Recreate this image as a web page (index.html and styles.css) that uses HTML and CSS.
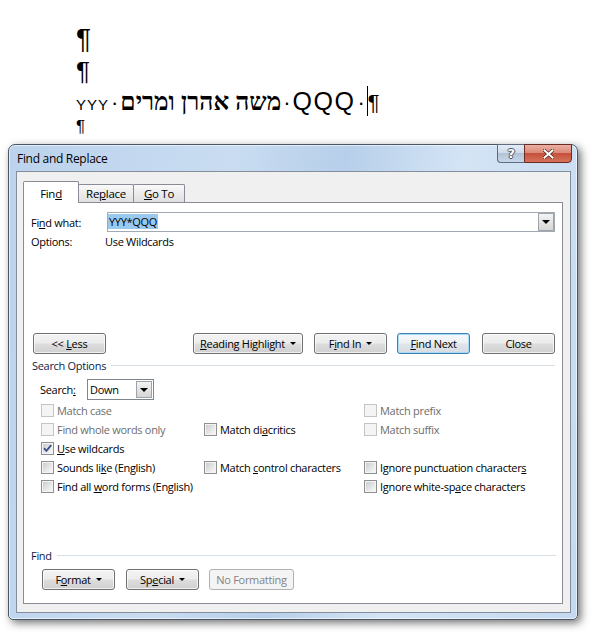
FILE: index.html
```html
<!DOCTYPE html>
<html lang="en">
<head>
    <meta charset="UTF-8">
    <title>Find and Replace</title>
    <link rel="stylesheet" href="styles.css">
</head>
<body>

    <div class="doc">
        <p class="mark-a">¶</p>
        <p class="mark-b">¶</p>
        <p class="text-line"><span class="yyy">YYY</span><span class="dot">·</span><span class="heb">משה אהרן ומרים</span><span class="dot">·</span><span class="qqq">QQQ</span><span class="dot">·</span><span class="caret"></span><span class="end">¶</span></p>
        <p class="mark-c">¶</p>
    </div>

    <div class="window">
        <div class="titlebar">
            <span class="title">Find and Replace</span>
            <div class="caption">
                <span class="cap help">?</span>
                <span class="cap close">
                    <svg width="11" height="10" viewBox="0 0 11 10">
                        <path d="M1.5 1.5 L9.5 8.5 M9.5 1.5 L1.5 8.5" stroke="#5a2a24" stroke-width="3.6" stroke-linecap="square"/>
                        <path d="M1.5 1.5 L9.5 8.5 M9.5 1.5 L1.5 8.5" stroke="#ffffff" stroke-width="2" stroke-linecap="square"/>
                    </svg>
                </span>
            </div>
        </div>

        <div class="client">
            <div class="tabs">
                <span class="tab active">Fin<u>d</u></span>
                <span class="tab replace">Re<u>p</u>lace</span>
                <span class="tab goto"><u>G</u>o To</span>
            </div>

            <div class="panel">
                <div class="find-row">
                    <span class="row-label">Fi<u>n</u>d what:</span>
                    <div class="combo">
                        <span class="sel">YYY*QQQ</span>
                        <span class="drop"><i class="tri"></i></span>
                    </div>
                </div>

                <div class="opt-row">
                    <span class="opt-label">Options:</span>
                    <span>Use Wildcards</span>
                </div>

                <div class="btn-row">
                    <span class="btn"><span>&lt;&lt; <u>L</u>ess</span></span>
                    <span class="btn menu rh"><span><u>R</u>eading Highlight</span></span>
                    <span class="btn menu fi"><span>F<u>i</u>nd In</span></span>
                    <span class="btn default fn"><span><u>F</u>ind Next</span></span>
                    <span class="btn cl"><span>Close</span></span>
                </div>

                <div class="group search-group">
                    <span class="group-label">Search Options</span>
                    <span class="rule"></span>
                </div>

                <div class="search-row">
                    <span class="search-label">Search<u>:</u></span>
                    <div class="select">
                        <span>Down</span>
                        <span class="drop"><i class="tri"></i></span>
                    </div>
                </div>

                <div class="checks">
                    <label class="check disabled"><span class="box"></span><span>Match case</span></label>
                    <span></span>
                    <label class="check disabled"><span class="box"></span><span>Match prefix</span></label>

                    <label class="check disabled"><span class="box"></span><span>Find whole words only</span></label>
                    <label class="check"><span class="box"></span><span>Match di<u>a</u>critics</span></label>
                    <label class="check disabled"><span class="box"></span><span>Match suffix</span></label>

                    <label class="check"><span class="box checked">
                        <svg width="11" height="11" viewBox="0 0 11 11"><path d="M2 5.2 L4.4 7.8 L9.2 2.2" fill="none" stroke="#3d4f8a" stroke-width="1.8"/></svg>
                    </span><span><u>U</u>se wildcards</span></label>
                    <span></span>
                    <span></span>

                    <label class="check"><span class="box"></span><span>Sounds li<u>k</u>e (English)</span></label>
                    <label class="check"><span class="box"></span><span>Match <u>c</u>ontrol characters</span></label>
                    <label class="check"><span class="box"></span><span>Ignore punctuation character<u>s</u></span></label>

                    <label class="check"><span class="box"></span><span>Find all <u>w</u>ord forms (English)</span></label>
                    <span></span>
                    <label class="check"><span class="box"></span><span>Ignore white-sp<u>a</u>ce characters</span></label>
                </div>

                <div class="group find-group">
                    <span class="group-label">Find</span>
                    <span class="rule"></span>
                </div>

                <div class="btn-row bottom-row">
                    <span class="btn menu"><span>F<u>o</u>rmat</span></span>
                    <span class="btn menu sp"><span>Sp<u>e</u>cial</span></span>
                    <span class="btn disabled nf"><span>No Formatting</span></span>
                </div>
            </div>
        </div>
    </div>

</body>
</html>
```

FILE: styles.css
```css
body {
    margin: 0;
    width: 599px;
    height: 632px;
    overflow: hidden;
    position: relative;
    background: #ffffff;
    font-family: "Liberation Sans", Arial, sans-serif;
    color: #000;
}

/* document behind the dialog */

.doc {
    padding: 22px 0 0 76px;
}

.doc p {
    margin: 0;
    white-space: nowrap;
}

.mark-a {
    font-size: 28px;
    line-height: 33px;
    height: 33px;
}

.mark-b {
    font-size: 26px;
    line-height: 33px;
    height: 31px;
}

.text-line {
    font-size: 26px;
    line-height: 28px;
    height: 31px;
}

.text-line span {
    line-height: 1;
}

.yyy {
    font-size: 15px;
    letter-spacing: 1px;
}

.dot {
    font-size: 22px;
    margin: 0 2px;
}

.heb {
    font-family: "Liberation Serif", "DejaVu Sans", serif;
    font-size: 24.5px;
    font-weight: bold;
}

.qqq {
    font-size: 25px;
    letter-spacing: 1.5px;
}

.caret {
    display: inline-block;
    width: 1px;
    height: 30px;
    background: #000;
    vertical-align: -6px;
}

.end {
    font-size: 22px;
}

.mark-c {
    font-size: 17px;
    line-height: 20px;
    height: 20px;
}

/* dialog window */

.window {
    position: absolute;
    left: 8px;
    top: 144px;
    width: 570px;
    height: 476px;
    box-sizing: border-box;
    padding: 0 6px 6px 7px;
    display: flex;
    flex-direction: column;
    border: 1px solid #4b5664;
    border-radius: 7px 7px 5px 5px;
    background: linear-gradient(100deg, #bcd3ed 0%, #c9dcf1 35%, #b7cfea 52%, #d4e4f5 70%, #c4d9f0 100%);
    box-shadow: 3px 3px 9px rgba(0, 0, 0, 0.55), inset 0 0 0 1px rgba(255, 255, 255, 0.6);
    font-family: "Open Sans", "Noto Sans", sans-serif;
    font-size: 11px;
    letter-spacing: -0.3px;
}

.titlebar {
    height: 26px;
    display: flex;
    justify-content: space-between;
    align-items: flex-start;
}

.title {
    margin: 6px 0 0 1px;
    font-size: 12px;
    line-height: 16px;
}

.caption {
    display: flex;
    margin: -1px -1px 0 0;
}

.cap {
    box-sizing: border-box;
    height: 19px;
    display: flex;
    align-items: center;
    justify-content: center;
}

.help {
    width: 27px;
    border: 1px solid #5d6c80;
    border-right: none;
    border-radius: 0 0 0 4px;
    background: linear-gradient(#e4ecf5, #cfdbe9 45%, #b3c3d7 50%, #c8d8ea);
    color: #fff;
    font-family: "DejaVu Sans", sans-serif;
    font-size: 13px;
    font-weight: bold;
    text-shadow: 1px 0 0 #4b5563, -1px 0 0 #4b5563, 0 1px 0 #4b5563, 0 -1px 0 #4b5563;
}

.close {
    width: 48px;
    border: 1px solid #6b2a22;
    border-radius: 0 0 4px 0;
    background: linear-gradient(#eab0a3, #db8a78 45%, #c6503a 50%, #d4735c);
}

.client {
    flex: 1;
    border: 1px solid #838e9c;
    background: #f0f0f0;
    padding: 9px 0 0 6px;
}

.tabs {
    display: flex;
    align-items: flex-end;
    height: 21px;
}

.tab {
    box-sizing: border-box;
    height: 18px;
    border: 1px solid #898c95;
    border-bottom: none;
    border-radius: 2px 2px 0 0;
    background: linear-gradient(#fafafa, #ededed 45%, #e0e0e0);
    text-align: center;
    font-size: 11.5px;
    line-height: 16px;
    padding-top: 1px;
    margin-left: -1px;
}

.tab.active {
    height: 22px;
    width: 56px;
    margin: 0 0 -1px 0;
    padding-top: 4px;
    background: #ffffff;
    position: relative;
    z-index: 1;
}

.tab.replace {
    width: 56px;
}

.tab.goto {
    width: 52px;
}

.panel {
    box-sizing: border-box;
    width: 540px;
    height: 402px;
    border: 1px solid #898c95;
    background: #ffffff;
}

.find-row {
    display: flex;
    align-items: center;
    height: 20px;
    margin-top: 9px;
    padding-left: 7px;
}

.row-label {
    width: 76px;
}

.combo {
    box-sizing: border-box;
    width: 448px;
    height: 20px;
    border: 1px solid #a2a9b1;
    display: flex;
    background: #fff;
}

.sel {
    height: 15px;
    line-height: 15px;
    margin-top: 1px;
    padding: 0 1px;
    background: #99c9ef;
}

.drop {
    box-sizing: border-box;
    width: 16px;
    height: 18px;
    margin-left: auto;
    border: 1px solid #9ea4ab;
    background: linear-gradient(#f4f4f4, #e4e4e4 50%, #d6d6d6);
    display: flex;
    align-items: center;
    justify-content: center;
}

.tri {
    width: 0;
    height: 0;
    border-left: 4px solid transparent;
    border-right: 4px solid transparent;
    border-top: 4px solid #000;
}

.opt-row {
    display: flex;
    height: 16px;
    line-height: 16px;
    margin-top: 2px;
    padding-left: 7px;
}

.opt-label {
    width: 74px;
}

.btn-row {
    display: flex;
    height: 21px;
    margin-top: 83px;
    padding-left: 9px;
}

.btn {
    box-sizing: border-box;
    width: 73px;
    height: 21px;
    border: 1px solid #707070;
    border-radius: 3px;
    background: linear-gradient(#f3f3f3, #ececec 48%, #dddddd 52%, #d0d0d0);
    box-shadow: inset 0 0 0 1px rgba(255, 255, 255, 0.7);
    line-height: 18px;
    text-align: center;
    display: flex;
    align-items: center;
    justify-content: center;
    white-space: nowrap;
}

.btn.menu::after {
    content: "";
    margin-left: 5px;
    border-left: 3px solid transparent;
    border-right: 3px solid transparent;
    border-top: 3px solid #000;
}

.btn.rh {
    width: 110px;
    margin-left: 87px;
}

.btn.fi {
    margin-left: 11px;
}

.btn.fn {
    margin-left: 10px;
}

.btn.cl {
    margin-left: 12px;
}

.btn.default {
    border-color: #3c7fb1;
    box-shadow: inset 0 0 0 1px #a9dcf6;
    background: linear-gradient(#f5f8fa, #edf1f4 48%, #e0e5e9 52%, #d6dce1);
}

.btn.disabled {
    border-color: #adb2b5;
    background: #f4f4f4;
    box-shadow: none;
    color: #838383;
}

.group {
    display: flex;
    align-items: center;
    height: 16px;
    margin-top: 3px;
    padding: 0 7px 0 8px;
}

.group-label {
    color: #0e1c45;
}

.rule {
    flex: 1;
    height: 1px;
    margin-left: 5px;
    background: #d5dfe5;
}

.search-row {
    display: flex;
    align-items: center;
    height: 21px;
    margin-top: 6px;
    padding-left: 16px;
}

.search-label {
    width: 47px;
}

.select {
    box-sizing: border-box;
    width: 67px;
    height: 21px;
    border: 1px solid #7f858c;
    padding: 1px 1px 1px 2px;
    display: flex;
    align-items: center;
    background: #fff;
}

.select .drop {
    height: 17px;
}

.checks {
    display: grid;
    grid-template-columns: 163px 160px 1fr;
    grid-auto-rows: 19px;
    margin-top: 1px;
    padding-left: 17px;
}

.check {
    display: flex;
    align-items: center;
    white-space: nowrap;
}

.box {
    box-sizing: border-box;
    width: 13px;
    height: 13px;
    margin-right: 3px;
    border: 1px solid #8e8f8f;
    background: linear-gradient(135deg, #c4c7cc, #eeeeee 70%, #f8f8f8);
    box-shadow: inset 0 0 0 1px #f4f4f4;
    display: flex;
    align-items: center;
    justify-content: center;
}

.check.disabled {
    color: #6d6d6d;
}

.check.disabled .box {
    border-color: #c4c4c4;
    background: #f4f4f4;
    box-shadow: none;
}

.find-group {
    margin-top: 51px;
    padding-left: 7px;
    padding-right: 6px;
}

.bottom-row {
    margin-top: 6px;
    padding-left: 18px;
}

.btn.sp {
    margin-left: 11px;
}

.btn.nf {
    width: 85px;
    margin-left: 10px;
}
```
